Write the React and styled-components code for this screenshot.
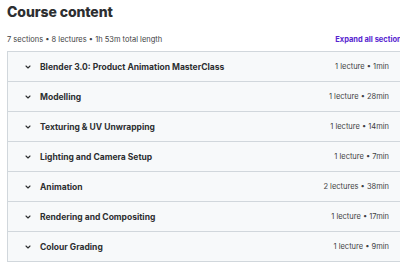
import React from "react";
import styled, { createGlobalStyle } from "styled-components";

const GlobalStyle = createGlobalStyle`
  body {
    margin: 0;
    background: #fff;
    font-family: Inter, "Noto Sans", sans-serif;
    color: #2d2f31;
    overflow: hidden;
  }
`;

const sections = [
  { title: "Blender 3.0: Product Animation MasterClass", meta: "1 lecture • 1min" },
  { title: "Modelling", meta: "1 lecture • 28min" },
  { title: "Texturing & UV Unwrapping", meta: "1 lecture • 14min" },
  { title: "Lighting and Camera Setup", meta: "1 lecture • 7min" },
  { title: "Animation", meta: "2 lectures • 38min" },
  { title: "Rendering and Compositing", meta: "1 lecture • 17min" },
  { title: "Colour Grading", meta: "1 lecture • 9min" },
];

const Chevron = () => (
  <svg width="6" height="6" viewBox="0 0 6 6" fill="none">
    <path d="M1 2 L3 4 L5 2" stroke="#2d2f31" strokeWidth="1.1" strokeLinecap="round" strokeLinejoin="round" />
  </svg>
);

const App = () => {
  return (
    <Page>
      <GlobalStyle />
      <Title>Course content</Title>
      <Summary>
        <span>7 sections • 8 lectures • 1h 53m total length</span>
        <Expand>Expand all sections</Expand>
      </Summary>
      <List>
        {sections.map((s) => (
          <Row key={s.title}>
            <Chevron />
            <RowTitle>{s.title}</RowTitle>
            <Meta>{s.meta}</Meta>
          </Row>
        ))}
      </List>
    </Page>
  );
};

const Page = styled.div`
  width: 399px;
  padding: 2px 0 0 7px;
`;

const Title = styled.h2`
  margin: 0;
  font-size: 14px;
  line-height: 19px;
  font-weight: 800;
  letter-spacing: -0.1px;
`;

const Summary = styled.div`
  display: flex;
  justify-content: space-between;
  align-items: center;
  height: 14px;
  margin-top: 11px;
  margin-bottom: 5px;
  font-size: 7.5px;
  color: #3e4143;
`;

const Expand = styled.span`
  color: #5624d0;
  font-weight: 700;
  white-space: nowrap;
`;

const List = styled.div`
  border: 1px solid #d1d7dc;
  border-bottom: none;
`;

const Row = styled.div`
  display: flex;
  align-items: center;
  height: 29px;
  padding: 0 16px 0 17px;
  background: #f7f9fa;
  border-bottom: 1px solid #d1d7dc;
`;

const RowTitle = styled.span`
  flex: 1;
  margin-left: 9px;
  font-size: 8.5px;
  font-weight: 700;
  color: #2d2f31;
  white-space: nowrap;
`;

const Meta = styled.span`
  font-size: 7.5px;
  color: #3e4143;
  white-space: nowrap;
`;

export default App;
